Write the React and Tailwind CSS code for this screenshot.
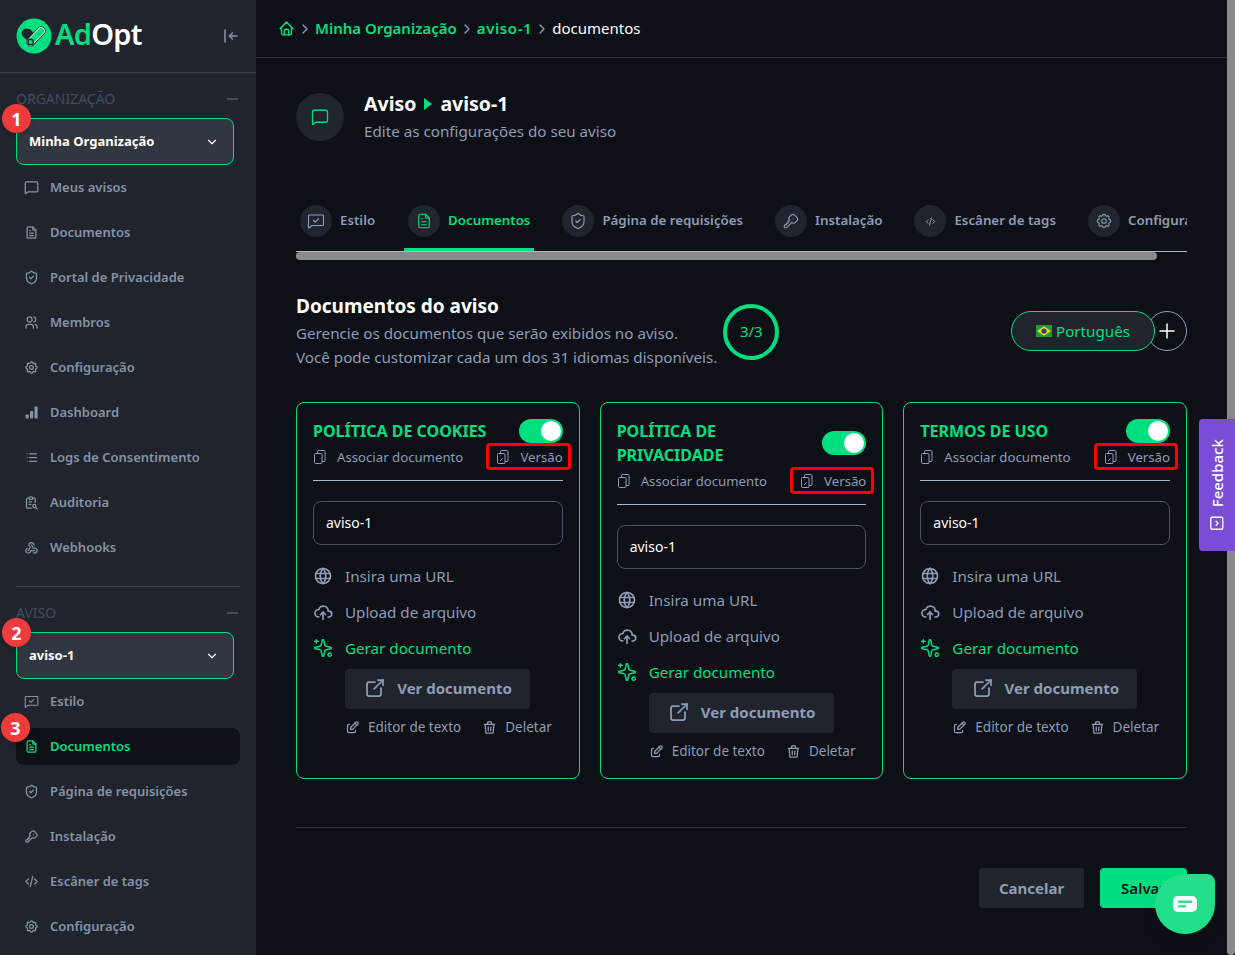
import { useState } from 'react';
import { MessageSquare, ShieldCheck, Sparkles } from 'lucide-react';
import {
    TbArrowBarToLeft, TbChevronDown, TbChevronRight, TbCloudUpload, TbCode, TbEdit,
    TbExternalLink, TbFileText, TbHome, TbKey, TbList, TbPlus,
    TbReportSearch, TbSettings, TbTrash, TbUsers, TbWebhook, TbWorld,
    TbSquareChevronRight,
} from 'react-icons/tb';

function BarsIcon({ className }) {
    return (
        <svg viewBox="0 0 15 15" className={className} fill="currentColor">
            <rect x="1.5" y="9.5" width="3.2" height="4" rx="0.8" />
            <rect x="6" y="6" width="3.2" height="7.5" rx="0.8" />
            <rect x="10.5" y="1.5" width="3.2" height="12" rx="0.8" />
        </svg>
    );
}

function FilesIcon({ className, slash }) {
    return (
        <svg viewBox="0 0 14 14" className={className} fill="none" stroke="currentColor" strokeWidth="1">
            <rect x="1.5" y="3.5" width="7.5" height="10" rx="1" />
            <path d="M4.5 3.5 V1.5 a1 1 0 0 1 1 -1 H11 a1 1 0 0 1 1 1 V10.5 a1 1 0 0 1 -1 1 H9" />
            {slash && <path d="M4 11 L6.5 8.5" />}
        </svg>
    );
}

function StyleIcon({ className, strokeWidth = 1.75 }) {
    return (
        <svg viewBox="0 0 24 24" className={className} fill="none" stroke="currentColor" strokeWidth={strokeWidth} strokeLinecap="round" strokeLinejoin="round">
            <path d="M3 4 h18 a1 1 0 0 1 1 1 v12 a1 1 0 0 1 -1 1 H7 l-4 3 a0.5 0.5 0 0 1 -1 -0.4 V5 a1 1 0 0 1 1 -1 z" />
            <path d="M8.5 11 l2.5 2.5 l4.5 -4.5" />
        </svg>
    );
}

const orgItems = [
    { label: 'Meus avisos', icon: MessageSquare },
    { label: 'Documentos', icon: TbFileText },
    { label: 'Portal de Privacidade', icon: ShieldCheck },
    { label: 'Membros', icon: TbUsers },
    { label: 'Configuração', icon: TbSettings },
    { label: 'Dashboard', icon: BarsIcon },
    { label: 'Logs de Consentimento', icon: TbList },
    { label: 'Auditoria', icon: TbReportSearch },
    { label: 'Webhooks', icon: TbWebhook },
];

const avisoItems = [
    { label: 'Estilo', icon: StyleIcon },
    { label: 'Documentos', icon: TbFileText, active: true },
    { label: 'Página de requisições', icon: ShieldCheck },
    { label: 'Instalação', icon: TbKey },
    { label: 'Escâner de tags', icon: TbCode },
    { label: 'Configuração', icon: TbSettings },
];

const tabs = [
    { label: 'Estilo', icon: StyleIcon },
    { label: 'Documentos', icon: TbFileText, active: true },
    { label: 'Página de requisições', icon: ShieldCheck },
    { label: 'Instalação', icon: TbKey },
    { label: 'Escâner de tags', icon: TbCode, small: true },
    { label: 'Configurações', icon: TbSettings },
];

const cards = [
    { lines: ['POLÍTICA DE COOKIES'] },
    { lines: ['POLÍTICA DE', 'PRIVACIDADE'] },
    { lines: ['TERMOS DE USO'] },
];

function Logo() {
    return (
        <svg viewBox="0 0 36 36" className="w-9 h-9 shrink-0">
            <circle cx="18" cy="18" r="17.5" fill="#00df80" />
            <path d="M17 28 L7 18.5 C4 15 6.5 10.5 10.5 10.5 C13.5 10.5 15.5 12 17 14.5 L24 20 Z" fill="#20252d" />
            <path d="M14.5 24 L25 13" stroke="#20252d" strokeWidth="9" strokeLinecap="round" />
            <path d="M14.5 24 L25 13" stroke="#e8edf2" strokeWidth="7.6" strokeLinecap="round" />
            <path d="M14.5 24 L25 13" stroke="#00df80" strokeWidth="5.8" strokeLinecap="round" />
            <circle cx="14.5" cy="24" r="3.4" fill="#20252d" />
            <circle cx="14.5" cy="24" r="2" fill="#00df80" />
        </svg>
    );
}

function Flag() {
    return (
        <svg viewBox="0 0 16 12" className="w-4 h-3 shrink-0">
            <rect width="16" height="12" fill="#1f9a3c" />
            <path d="M8 1.2 L15 6 L8 10.8 L1 6 Z" fill="#fcd116" />
            <circle cx="8" cy="6" r="2.6" fill="#1d3f8f" />
        </svg>
    );
}

function Badge({ n }) {
    return (
        <span className="absolute -left-[15px] -top-[15px] z-10 w-[29px] h-[29px] rounded-full bg-[#ef3b3b] text-white text-lg font-bold flex items-center justify-center shadow-md">
            {n}
        </span>
    );
}

function SectionLabel({ children }) {
    return (
        <div className="flex items-center justify-between h-5 text-sm text-[#434c5e]">
            <span>{children}</span>
            <span className="w-[11px] h-[2px] mr-0.5 bg-[#434c5e]"></span>
        </div>
    );
}

function SideSelect({ label, n }) {
    return (
        <div className="relative h-[47px] mr-[6px] rounded-lg border border-[#00df80] bg-[#313741] pl-3 pr-[14px] flex items-center justify-between">
            <Badge n={n} />
            <span className="text-[13px] font-bold text-white">{label}</span>
            <TbChevronDown className="w-3.5 h-3.5 text-white" />
        </div>
    );
}

function SideItem({ item }) {
    const Icon = item.icon;
    return (
        <div className={`h-[37px] mb-2 rounded-lg pl-2 flex items-center gap-[11px] text-[13px] font-semibold ${item.active ? 'bg-[#0d1017] text-[#00df80]' : 'text-[#8592a6]'}`}>
            <Icon className="w-[15px] h-[15px] shrink-0" />
            <span>{item.label}</span>
        </div>
    );
}

function Toggle() {
    const [on, setOn] = useState(true);
    return (
        <button
            onClick={() => setOn(!on)}
            className="w-11 h-6 shrink-0 rounded-full bg-[#00df80] flex items-center justify-end px-0.5"
        >
            <span className="w-5 h-5 rounded-full bg-white"></span>
        </button>
    );
}

function DocCard({ lines }) {
    return (
        <div className="rounded-lg border border-[#00df80] px-4 pt-4 pb-[17px]">
            <div className="flex items-center justify-between">
                <div className="text-base leading-6 font-bold text-[#00df80] whitespace-nowrap">
                    {lines.map((l) => <div key={l}>{l}</div>)}
                </div>
                <Toggle />
            </div>
            <div className="mt-1.5 pb-[15px] border-b border-[#a9b4c8] flex items-center justify-between text-[13.2px] leading-[16px] text-[#8f9cb5]">
                <span className="flex items-center gap-2.5">
                    <FilesIcon className="w-[14px] h-[14px]" />
                    Associar documento
                </span>
                <span className="relative flex items-center gap-2.5">
                    <span className="absolute -left-[10px] -right-[8px] -top-[6px] -bottom-[5px] rounded border-[3px] border-[#ff0000]"></span>
                    <FilesIcon slash className="w-[14px] h-[14px]" />
                    Versão
                </span>
            </div>
            <div className="mt-5 h-11 rounded-lg border border-[#4a5160] px-3 flex items-center text-sm text-white">aviso-1</div>
            <div className="mt-[19px] flex flex-col gap-3 text-[15.2px] leading-6 text-[#8f9cb5]">
                <div className="flex items-center gap-3">
                    <TbWorld className="w-5 h-5" />
                    Insira uma URL
                </div>
                <div className="flex items-center gap-3">
                    <TbCloudUpload className="w-5 h-5" />
                    Upload de arquivo
                </div>
                <div className="flex items-center gap-3 text-[#00df80]">
                    <Sparkles className="w-5 h-5 -scale-x-100" strokeWidth={1.75} />
                    Gerar documento
                </div>
            </div>
            <div className="pl-8">
                <div className="mt-[9px] h-10 w-[185px] pb-0.5 rounded bg-[#20252d] flex items-center justify-center gap-2.5 text-[15px] font-bold text-[#8f9cb5]">
                    <TbExternalLink className="w-6 h-6" strokeWidth={1.75} />
                    Ver documento
                </div>
                <div className="mt-2 flex items-center gap-[21px] text-[13.5px] leading-5 text-[#8f9cb5]">
                    <span className="flex items-center gap-2">
                        <TbEdit className="w-[15px] h-[15px]" />
                        Editor de texto
                    </span>
                    <span className="flex items-center gap-2">
                        <TbTrash className="w-[15px] h-[15px]" />
                        Deletar
                    </span>
                </div>
            </div>
        </div>
    );
}

export default function App() {
    return (
        <div className="flex h-screen overflow-hidden bg-[#0d1017] font-['Noto_Sans',sans-serif]">
            {/* Sidebar */}
            <aside className="w-64 shrink-0 bg-[#20252d] overflow-hidden">
                <div className="h-[73px] border-b border-[#3a3f49] pl-4 pr-4 flex items-center justify-between">
                    <div className="flex items-center gap-[3px]">
                        <Logo />
                        <span className="-mt-1 text-[29px] font-semibold tracking-tight">
                            <span className="text-[#00df80]">Ad</span>
                            <span className="text-white">Opt</span>
                        </span>
                    </div>
                    <TbArrowBarToLeft className="w-[18px] h-[18px] text-[#8592a6]" />
                </div>
                <div className="pl-4 pr-4 pt-4">
                    <SectionLabel>ORGANIZAÇÃO</SectionLabel>
                    <div className="mt-[9px]"><SideSelect label="Minha Organização" n={1} /></div>
                    <div className="mt-1">
                        {orgItems.map((item) => <SideItem key={item.label} item={item} />)}
                    </div>
                    <div className="mt-5 border-t border-[#3a3f49]"></div>
                    <div className="mt-4"><SectionLabel>AVISO</SectionLabel></div>
                    <div className="mt-[9px]"><SideSelect label="aviso-1" n={2} /></div>
                    <div className="mt-1 relative">
                        {avisoItems.map((item) => (
                            <div key={item.label} className="relative">
                                {item.active && <Badge n={3} />}
                                <SideItem item={item} />
                            </div>
                        ))}
                    </div>
                </div>
            </aside>

            {/* Main */}
            <main className="flex-1 min-w-0 overflow-hidden">
                <header className="h-[58px] border-b border-[#2c3038] px-[22px] flex items-center gap-0.5 text-[15px]">
                    <TbHome className="w-[17px] h-[17px] text-[#00df80]" />
                    <TbChevronRight className="w-4 h-4 text-[#8f9cb5]" />
                    <span className="font-semibold text-[#00df80]">Minha Organização</span>
                    <TbChevronRight className="w-4 h-4 text-[#8f9cb5]" />
                    <span className="font-semibold text-[#00df80] tracking-[0.6px]">aviso-1</span>
                    <TbChevronRight className="w-4 h-4 text-[#8f9cb5]" />
                    <span className="text-white">documentos</span>
                </header>

                <div className="px-10">
                    <div className="mt-[35px] flex items-start gap-5">
                        <div className="w-12 h-12 rounded-full bg-[#20252d] flex items-center justify-center">
                            <MessageSquare className="w-[18px] h-[18px] text-[#00df80]" strokeWidth={1.75} />
                        </div>
                        <div className="-mt-px">
                            <div className="flex items-center gap-2 text-[19.5px] leading-6 font-bold text-white">
                                Aviso
                                <span className="w-0 h-0 border-y-[6px] border-y-transparent border-l-[8px] border-l-[#00df80]"></span>
                                aviso-1
                            </div>
                            <div className="mt-[5px] text-[15.2px] leading-5 text-[#8f9cb5]">Edite as configurações do seu aviso</div>
                        </div>
                    </div>

                    {/* Tabs */}
                    <div className="mt-[64px] overflow-hidden">
                        <div className="flex gap-6">
                            {tabs.map((tab, i) => {
                                const Icon = tab.icon;
                                return (
                                    <div key={tab.label} className={`shrink-0 pl-1 pb-[11px] flex items-center gap-2 border-b-[3px] text-[13.3px] font-semibold ${i === 0 ? 'pr-[5px]' : 'pr-1'} ${tab.active ? 'border-[#00df80] text-[#00df80]' : 'border-transparent text-[#8f9cb5]'}`}>
                                        <span className="w-8 h-8 rounded-full bg-[#20252d] flex items-center justify-center">
                                            <Icon className={tab.small ? 'w-[11px] h-[11px]' : 'w-[18px] h-[18px]'} strokeWidth={tab.small ? 2 : 1.5} />
                                        </span>
                                        {tab.label}
                                    </div>
                                );
                            })}
                        </div>
                        <div className="border-t border-[#a9b4c8]">
                            <div className="h-2 w-[861px] rounded-full bg-[#8a8a8a]"></div>
                        </div>
                    </div>

                    {/* Section heading */}
                    <div className="mt-[34px] flex items-start justify-between">
                        <div className="flex items-center gap-1.5">
                            <div>
                                <h2 className="text-[19px] leading-6 font-bold text-white">Documentos do aviso</h2>
                                <p className="mt-[3px] text-[15.2px] leading-6 text-[#8f9cb5]">
                                    Gerencie os documentos que serão exibidos no aviso.<br />
                                    Você pode customizar cada um dos 31 idiomas disponíveis.
                                </p>
                            </div>
                            <div className="w-14 h-14 rounded-full border-4 border-[#00df80] flex items-center justify-center text-[15px] text-[#00df80]">3/3</div>
                        </div>
                        <div className="mt-[17px] flex items-center">
                            <div className="relative z-10 w-36 h-10 rounded-full border border-[#00df80] bg-[#20252d] flex items-center justify-center gap-1 text-[15.2px] text-[#00df80]">
                                <Flag />
                                Português
                            </div>
                            <div className="-ml-2 w-10 h-10 rounded-full border border-[#8f9cb5] flex items-center justify-center text-white">
                                <TbPlus className="w-6 h-6" strokeWidth={1.5} />
                            </div>
                        </div>
                    </div>

                    {/* Cards */}
                    <div className="mt-[33px] grid grid-cols-3 gap-5">
                        {cards.map((c) => <DocCard key={c.lines[0]} lines={c.lines} />)}
                    </div>

                    <div className="mt-12 border-t border-[#2c3038]"></div>

                    <div className="mt-10 flex justify-end gap-4">
                        <button className="w-[105px] h-10 rounded bg-[#20252d] text-[15px] font-bold text-[#8f9cb5]">Cancelar</button>
                        <button className="w-[87px] h-10 rounded bg-[#00df80] text-[15px] font-semibold text-[#0d1017]">Salvar</button>
                    </div>
                </div>
            </main>

            {/* Page scrollbar */}
            <div className="w-2 shrink-0 bg-[#8a8a8a] rounded-b"></div>

            {/* Feedback tab */}
            <div className="fixed right-0 top-[419px] w-9 h-[132px] rounded-l bg-[#7b4dd6] flex items-center justify-center">
                <span className="-rotate-90 whitespace-nowrap flex items-center gap-2 text-[15px] font-medium text-white">
                    <TbSquareChevronRight className="w-4 h-4 rotate-90" />
                    Feedback
                </span>
            </div>

            {/* Chat button */}
            <button className="fixed right-5 bottom-[21px] w-[60px] h-[60px] rounded-[30px] rounded-tr-lg bg-[#22df8a] shadow-lg flex items-center justify-center">
                <svg viewBox="0 0 24 16" className="w-6 h-4">
                    <rect width="24" height="16" rx="5" fill="#fff" />
                    <rect x="5" y="4.5" width="14" height="2.4" rx="1" fill="#22df8a" />
                    <rect x="5" y="9.2" width="8" height="2.4" rx="1" fill="#22df8a" />
                </svg>
            </button>
        </div>
    );
}
